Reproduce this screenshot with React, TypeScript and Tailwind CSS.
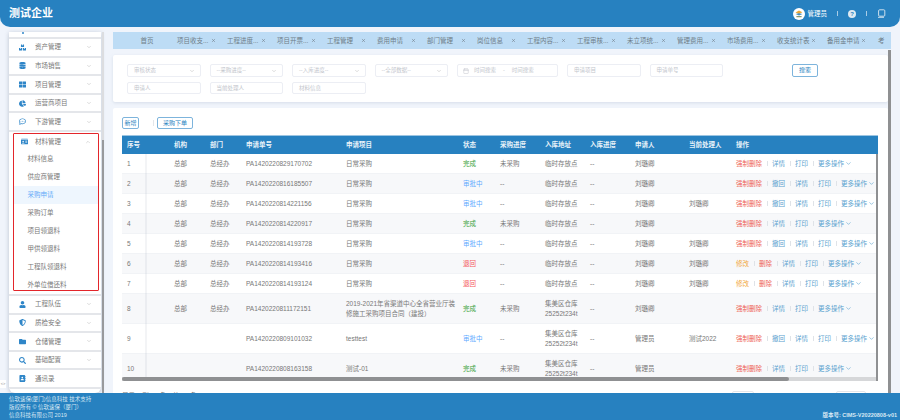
import { ChevronDown, ChevronUp, Calendar, X } from "lucide-react";
import {
  FaBoxes,
  FaDatabase,
  FaThLarge,
  FaChartPie,
  FaRegCommentDots,
  FaIdCard,
  FaUser,
  FaShieldAlt,
  FaFolder,
  FaSearch,
  FaAddressBook,
} from "react-icons/fa";
import type { ReactNode } from "react";

const tabs = [
  "项目收支...",
  "工程进度...",
  "项目开票...",
  "工程管理",
  "费用申请",
  "部门管理",
  "岗位信息",
  "工程内容...",
  "工程审核...",
  "未立项统...",
  "管理费用...",
  "市场费用...",
  "收支统计表",
  "备用金申请",
];

const subItems = ["材料信息", "供应商管理", "采购申请", "采购订单", "项目领退料", "甲供领退料", "工程队领退料", "外单位借还料"];

type Row = {
  no: number;
  org: string;
  dept: string;
  code: string;
  project: string;
  status: string;
  buy: string;
  addr: string;
  person: string;
  handler: string;
  actions: string[];
  tall?: boolean;
};

const forced = ["强制删除", "详情", "打印"];
const forcedBack = ["强制删除", "撤回", "详情", "打印"];
const edit = ["修改", "删除", "详情", "打印"];
const tempAddr = "临时存放点";
const farAddr = "集美区仓库\n25252t234t";

const rows: Row[] = [
  { no: 1, org: "总部", dept: "总经办", code: "PA1420220829170702", project: "日常采购", status: "完成", buy: "未采购", addr: tempAddr, person: "刘璐卿", handler: "", actions: forced },
  { no: 2, org: "总部", dept: "总经办", code: "PA1420220816185507", project: "日常采购", status: "审批中", buy: "--", addr: tempAddr, person: "刘璐卿", handler: "", actions: forcedBack },
  { no: 3, org: "总部", dept: "总经办", code: "PA1420220814221156", project: "日常采购", status: "审批中", buy: "--", addr: tempAddr, person: "刘璐卿", handler: "刘璐卿", actions: forcedBack },
  { no: 4, org: "总部", dept: "总经办", code: "PA1420220814220917", project: "日常采购", status: "完成", buy: "未采购", addr: tempAddr, person: "刘璐卿", handler: "", actions: forced },
  { no: 5, org: "总部", dept: "总经办", code: "PA1420220814193728", project: "日常采购", status: "审批中", buy: "--", addr: tempAddr, person: "刘璐卿", handler: "刘璐卿", actions: forcedBack },
  { no: 6, org: "总部", dept: "总经办", code: "PA1420220814193416", project: "日常采购", status: "退回", buy: "--", addr: tempAddr, person: "刘璐卿", handler: "刘璐卿", actions: edit },
  { no: 7, org: "总部", dept: "总经办", code: "PA1420220814193124", project: "日常采购", status: "退回", buy: "--", addr: tempAddr, person: "刘璐卿", handler: "刘璐卿", actions: edit },
  { no: 8, org: "总部", dept: "总经办", code: "PA1420220811172151", project: "2019-2021年省渠道中心全省营业厅装\n修施工采购项目合同（建投）", status: "完成", buy: "未采购", addr: farAddr, person: "刘璐卿", handler: "", actions: forced, tall: true },
  { no: 9, org: "", dept: "", code: "PA1420220809101032", project: "testtest", status: "审批中", buy: "--", addr: farAddr, person: "管理员", handler: "测试2022", actions: forcedBack, tall: true },
  { no: 10, org: "", dept: "", code: "PA1420220808163158", project: "测试-01", status: "完成", buy: "未采购", addr: farAddr, person: "管理员", handler: "", actions: forced, tall: true },
];

const columns = ["序号", "机构", "部门", "申请单号", "申请项目", "状态", "采购进度", "入库地址", "入库进度", "申请人", "当前处理人", "操作"];
const gridCols = "grid grid-cols-[47px_36px_36px_100px_117px_37px_45px_45px_45px_54px_47px_145px]";

function statusColor(s: string) {
  if (s === "完成") return "text-[#3ba23b]";
  if (s === "审批中") return "text-[#62aaff]";
  return "text-[#f4575a]";
}

function actionColor(a: string) {
  if (a === "强制删除" || a === "删除") return "text-[#ee5f55]";
  if (a === "修改") return "text-[#f2a73b]";
  return "text-[#5aa2cf]";
}

function SideItem({ icon, label }: { icon: ReactNode; label: string }) {
  return (
    <div className="flex h-[18.6px] shrink-0 items-center border-b-2 border-[#e4e6ea] bg-white pr-[9px]">
      <span className="flex w-[26px] shrink-0 justify-center text-[7px] text-[#2f86c8]">{icon}</span>
      <span className="flex-1 text-[6.5px] text-[#777]">{label}</span>
      {label !== "通讯录" && <ChevronDown size={6} className="text-[#bbb]" />}
    </div>
  );
}

function Field({ label, select, w = "w-[73.5px]" }: { label: string; select?: boolean; w?: string }) {
  return (
    <div className={`flex h-[12.5px] items-center justify-between rounded-[2px] border border-[#eceef4] pl-[6px] pr-[3px] text-[5.5px] text-[#c2c5cc] ${w}`}>
      <span>{label}</span>
      {select && <ChevronDown size={6} className="mr-[2px] text-[#bbb]" />}
    </div>
  );
}

function Sidebar() {
  return (
    <div className="flex h-[361px] w-[95px] shrink-0">
      <div className="flex w-[92px] flex-col overflow-hidden rounded-b-[6px] bg-white shadow-[0_1px_4px_rgba(120,130,150,0.45)]">
        <div className="relative h-[7px] shrink-0 border-b-2 border-[#e4e6ea]">
          <span className="absolute left-[13px] top-0 h-[2px] w-[2px] rounded-full bg-[#2f86c8]" />
        </div>
        <SideItem icon={<FaBoxes />} label="资产管理" />
        <SideItem icon={<FaDatabase />} label="市场销售" />
        <SideItem icon={<FaThLarge />} label="项目管理" />
        <SideItem icon={<FaChartPie />} label="运营商项目" />
        <SideItem icon={<FaRegCommentDots />} label="下游管理" />
        <div className="ml-[4px] mr-[2px] mt-[1px] h-[158px] shrink-0 overflow-hidden rounded-[1px] border-[1.5px] border-[#e3262b]">
          <div className="flex h-[16px] items-center pr-[7px]">
            <span className="flex w-[21px] shrink-0 justify-center text-[7px] text-[#2f86c8]">
              <FaIdCard />
            </span>
            <span className="flex-1 text-[6.5px] text-[#777]">材料管理</span>
            <ChevronUp size={6} className="text-[#bbb]" />
          </div>
          {subItems.map((s) => (
            <div
              key={s}
              className={`flex h-[18px] items-center pl-[13.5px] text-[6.5px] ${s === "采购申请" ? "bg-[#eef6fe] text-[#5fa9f8]" : "text-[#777]"}`}
            >
              {s}
            </div>
          ))}
        </div>
        <div className="h-[5px] shrink-0 border-b-2 border-[#e4e6ea]" />
        <SideItem icon={<FaUser />} label="工程队伍" />
        <SideItem icon={<FaShieldAlt />} label="质检安全" />
        <SideItem icon={<FaFolder />} label="仓储管理" />
        <SideItem icon={<FaSearch />} label="基础配置" />
        <SideItem icon={<FaAddressBook />} label="通讯录" />
      </div>
      <div className="ml-[0.5px] flex w-[2.5px] flex-col bg-[#dcdde0]">
        <div className="mt-[108px] flex-1 bg-[#98999c]" />
      </div>
    </div>
  );
}

function Toolbar() {
  return (
    <div className="flex h-[27px] shrink-0 items-center justify-between rounded-b-[10px] bg-[#2781c0] pl-[9px] pr-[14px] text-white">
      <div className="text-[11px] font-bold leading-none">测试企业</div>
      <div className="flex items-center">
        <svg width="12" height="12" viewBox="0 0 12 12">
          <circle cx="6" cy="6" r="6" fill="#fff" />
          <path d="M2.5 4.5 6 2.6l3.4 1.7L6 6z" fill="#e8a83a" />
          <path d="M2.6 6 6 5.2 9.5 6 6 7.6z" fill="#3f8fc4" />
          <rect x="3.4" y="8.2" width="5.2" height="1" fill="#6a7f4d" />
        </svg>
        <span className="ml-[3px] text-[6.5px]">管理员</span>
        <span className="ml-[10px] h-[5px] w-px bg-[#a9cce6]" />
        <span className="ml-[10px] flex h-[8px] w-[8px] items-center justify-center rounded-full bg-[#dfeaf2] text-[6px] font-bold leading-none text-[#2781c0]">?</span>
        <span className="ml-[10px] h-[5px] w-px bg-[#a9cce6]" />
        <svg className="ml-[10px]" width="9" height="9" viewBox="0 0 9 9" fill="none" stroke="#dfeaf2" strokeWidth="0.9">
          <rect x="1.6" y="0.8" width="6.2" height="6.4" rx="1" />
          <path d="M1 8.3h6" />
        </svg>
      </div>
    </div>
  );
}

function TabBar() {
  return (
    <div className="flex h-[17px] w-[778px] shrink-0 items-center overflow-hidden bg-[#bddcf5] pl-[9px] text-[6.5px] text-[#6e7c88]">
      <div className="flex w-[50px] shrink-0 justify-center">首页</div>
      {tabs.map((t) => (
        <div key={t} className="flex w-[50px] shrink-0 items-center justify-between pl-[5px] pr-[6px]">
          <span className="whitespace-nowrap">{t}</span>
          <X size={5} strokeWidth={2.5} className="shrink-0" />
        </div>
      ))}
      <div className="w-[50px] shrink-0 pl-[6px]">考</div>
    </div>
  );
}

function Filters() {
  return (
    <div className="mt-[6px] h-[47px] w-[775px] shrink-0 rounded-[2px] bg-white pl-[14px] pt-[9px] shadow-[0_1px_3px_rgba(170,180,200,0.35)]">
      <div className="flex items-center gap-[9px]">
        <Field label="审核状态" select />
        <Field label="--采购进度--" select />
        <Field label="--入库进度--" select />
        <Field label="--全部数据--" select />
        <div className="flex h-[12.5px] w-[101px] items-center rounded-[2px] border border-[#eceef4] pl-[5px] text-[5.5px] text-[#c2c5cc]">
          <Calendar size={6} className="mr-[5px]" />
          <span>时间搜索</span>
          <span className="mx-[7px]">-</span>
          <span>时间搜索</span>
        </div>
        <Field label="申请项目" />
        <Field label="申请单号" />
        <button className="ml-[60px] flex h-[13px] w-[26px] items-center justify-center rounded-[2px] border border-[#7db4dc] text-[6px] text-[#2781c0]">搜索</button>
      </div>
      <div className="mt-[4.5px] flex gap-[9px]">
        <Field label="申请人" />
        <Field label="当前处理人" />
        <Field label="材料信息" />
      </div>
    </div>
  );
}

function Actions({ items }: { items: string[] }) {
  return (
    <div className="flex items-center whitespace-nowrap pl-[5px]">
      {items.map((a) => (
        <span key={a} className="flex items-center">
          <span className={actionColor(a)}>{a}</span>
          <span className="mx-[4.5px] h-[5px] w-px bg-[#dfe3e8]" />
        </span>
      ))}
      <span className="text-[#5aa2cf]">更多操作</span>
      <ChevronDown size={7} className="ml-[1px] text-[#5aa2cf]" />
    </div>
  );
}

function DataRow({ row, striped }: { row: Row; striped: boolean }) {
  const cell = "pl-[5px] whitespace-pre-line";
  return (
    <div
      className={`${gridCols} shrink-0 items-center border-b border-[#f1f3f6] text-[6.5px] leading-[10px] text-[#777] ${row.tall ? "h-[30px]" : "h-[20px]"} ${striped ? "bg-[#f7f8fa]" : "bg-white"}`}
    >
      <div className={cell}>{row.no}</div>
      <div className={cell}>{row.org}</div>
      <div className={cell}>{row.dept}</div>
      <div className={cell}>{row.code}</div>
      <div className={cell}>{row.project}</div>
      <div className={`${cell} ${statusColor(row.status)}`}>{row.status}</div>
      <div className={cell}>{row.buy}</div>
      <div className={cell}>{row.addr}</div>
      <div className={cell}>--</div>
      <div className={cell}>{row.person}</div>
      <div className={cell}>{row.handler}</div>
      <Actions items={row.actions} />
    </div>
  );
}

function DataTable() {
  return (
    <div className="mt-[6px] flex min-h-0 w-[775px] flex-1 flex-col overflow-hidden rounded-t-[2px] bg-white px-[9px] pt-[9px]">
      <div className="flex h-[12px] shrink-0 items-center text-[6px] text-[#2781c0]">
        <button className="h-[12px] w-[17px] rounded-[2px] border border-[#7db4dc]">新增</button>
        <span className="ml-[14px] mr-[3px] h-[6px] w-px bg-[#e3e6ea]" />
        <button className="h-[12px] w-[36px] rounded-[2px] border border-[#7db4dc]">采购下单</button>
      </div>
      <div className="relative mt-[6px] w-[756px] shrink-0">
        <div className={`${gridCols} h-[19px] items-center border-t border-[#9cc5e2] bg-[#2781c0] text-[6.5px] font-bold text-[#e8f2f9]`}>
          {columns.map((c) => (
            <div key={c} className="pl-[5px]">
              {c}
            </div>
          ))}
        </div>
        <div className="flex h-[223px] flex-col overflow-hidden">
          {rows.map((r, i) => (
            <DataRow key={r.no} row={r} striped={i % 2 === 1} />
          ))}
        </div>
        <div className="flex h-[4px] bg-[#d6d7d9]">
          <div className="w-[667px] rounded-[2px] bg-[#8f9092]" />
        </div>
        {/* fixed columns and vertical scrollbar sit over the rows */}
        <div className="absolute bottom-[4px] left-[23px] top-[19px] w-[2px] bg-[#8a94a6]/10" />
        <div className="absolute bottom-0 right-0 top-[19px] w-[2px] bg-[#8f9092]" />
      </div>
      <div className="mt-[10px] flex h-[10px] shrink-0 items-center text-[6.5px] text-[#777]">
        <span>显示 1 到 10 条，共 31 条</span>
        <span className="ml-[536px] h-[10px] w-[22px] rounded-[2px] border border-[#e4e6ea]" />
        <span className="ml-[82px] h-[10px] w-[30px] rounded-[2px] border border-[#e4e6ea]" />
      </div>
    </div>
  );
}

export default function App() {
  return (
    <div className="relative flex h-[420px] w-[900px] flex-col overflow-hidden bg-[#f0f4fb] font-['Liberation_Sans','Noto_Sans_CJK_SC',sans-serif]">
      <Toolbar />
      <div className="flex min-h-0 flex-1 pl-[9px] pt-[5px]">
        <Sidebar />
        <div className="ml-[9px] flex min-w-0 flex-1 flex-col">
          <TabBar />
          <Filters />
          <DataTable />
        </div>
      </div>
      <div className="relative flex h-[27px] shrink-0 items-end justify-between bg-[#2781c0] pb-[1px] pl-[9px] pr-[3px] text-[5.5px] leading-[8px] text-[#d8e8f4]">
        <div>
          <div>信软速保(厦门)信息科技 技术支持</div>
          <div>版权所有 © 信软速保（厦门）</div>
          <div>信息科技有限公司 2019</div>
        </div>
        <div className="font-bold">版本号: CIMS-V20220808-v01</div>
      </div>
      {/* page scrollbar and collapse handle */}
      <div className="absolute bottom-[27px] right-[9px] top-[50px] w-[3px] bg-[#8f9092]" />
      <div className="absolute left-0 top-[380px] flex h-[8px] w-[6px] items-center justify-center bg-white text-[4px] text-[#888]">&lt;&gt;</div>
    </div>
  );
}
